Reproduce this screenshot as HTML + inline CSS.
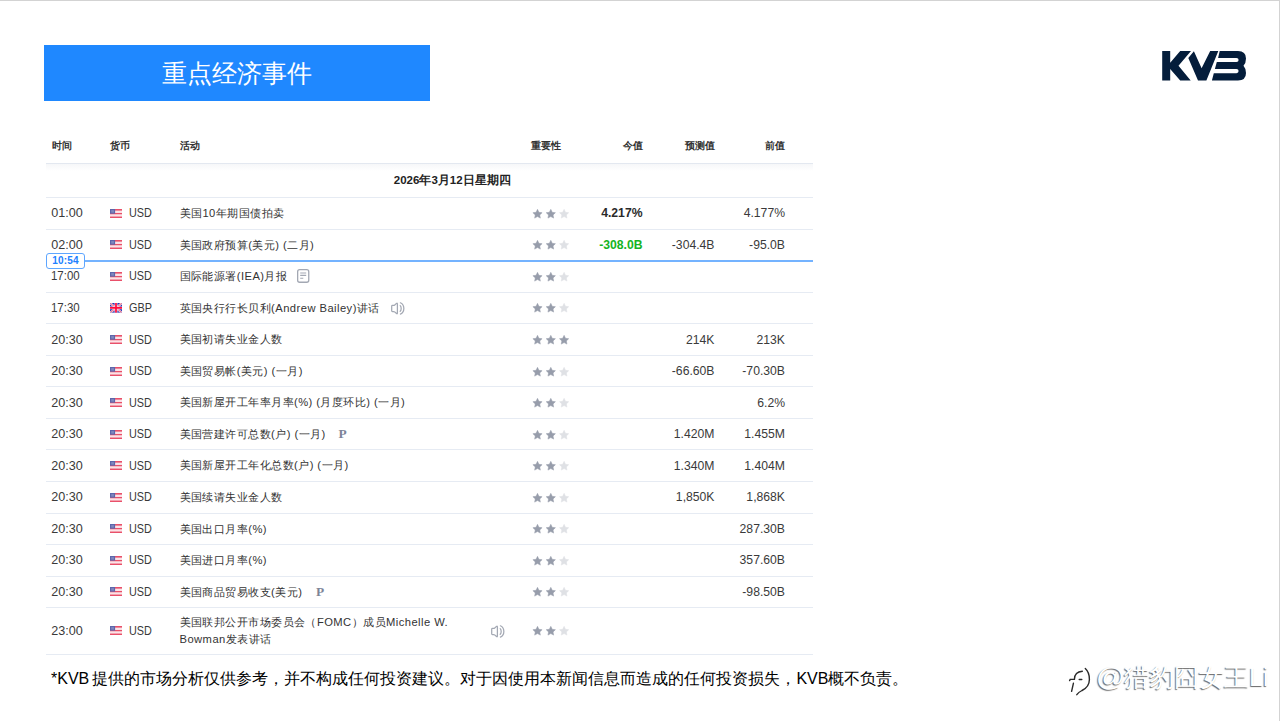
<!DOCTYPE html>
<html><head><meta charset="utf-8">
<style>
*{margin:0;padding:0;box-sizing:border-box}
html,body{width:1280px;height:721px;overflow:hidden;background:#fff}
body{position:relative;font-family:"Liberation Sans",sans-serif;color:#333}
.bt{position:absolute;left:0;top:0;width:1280px;height:1px;background:#d3d3d3}
.br{position:absolute;right:0;top:0;width:1px;height:721px;background:#d3d3d3}
.title{position:absolute;left:44px;top:45px;width:386px;height:56px;background:#1f88ff;color:#fff;font-size:25px;font-weight:300;text-align:center;line-height:56px}
.logo{position:absolute;left:0;top:0;width:1280px;height:100px}
.tbl{position:absolute;left:46px;top:130px;width:767px}
.hd{position:absolute;top:0;height:33.9px;width:767px;border-bottom:1px solid #e3e8f0}
.hd span{position:absolute;top:9px;font-size:10.2px;font-weight:bold;color:#333;line-height:14px;white-space:nowrap}
.shadow{position:absolute;left:0;top:33.9px;width:767px;height:7px;background:linear-gradient(#f6f7f9,#fff)}
.date{position:absolute;top:43.3px;left:347.8px;font-size:11.5px;font-weight:bold;color:#222;line-height:14px;white-space:nowrap}
.row{position:absolute;left:0;width:767px;border-top:1px solid #e6ebf3}
.row .t{position:absolute;left:5.3px;font-size:12.6px;color:#3a3a3a}
.row .f{position:absolute;left:64px;width:12px;height:9px}
.row .c{position:absolute;left:82.6px;font-size:12.6px;color:#3a3a3a;transform:scaleX(0.86);transform-origin:0 50%}
.row .a{position:absolute;left:133.5px;font-size:11.2px;letter-spacing:0.45px;color:#333;font-weight:500;white-space:nowrap}
.row .s{position:absolute;left:486px;width:40px;height:10px}
.row .v1,.row .v2,.row .v3{position:absolute;text-align:right;font-size:12.2px;color:#3a3a3a;white-space:nowrap}
.row .t,.row .c,.row .a,.row .v1,.row .v2,.row .v3,.row .pp{top:0;bottom:0;display:flex;align-items:center}
.row .v1,.row .v2,.row .v3{justify-content:flex-end}
.row .f,.row .s{top:50%;margin-top:-4.5px}
.row .ic{position:absolute}
.row .pp{position:absolute;font-family:"Liberation Serif",serif;font-size:13.4px;color:#7d8498;font-weight:bold;padding-top:0.6px}
.row .a{line-height:16.4px}
.row .v1{right:170.5px;font-weight:bold;color:#2a2a2a}
.row .v2{right:98.5px}
.row .v3{right:28px}
.green{color:#14b423!important}
.disc{position:absolute;left:51px;top:667.5px;font-size:16px;word-spacing:-1.3px;font-weight:500;color:#000;white-space:nowrap;line-height:22px}
.wm{position:absolute;left:1096px;top:662px;font-size:25px;color:#fff;white-space:nowrap;text-shadow:-0.8px 1px 1px rgba(0,0,0,.6);font-weight:300;line-height:30px}
.now{position:absolute;left:0;top:130px;width:767px;height:1.6px;background:#74b3ff}
.badge{position:absolute;left:0;top:122.7px;width:39px;height:16.2px;border:1.6px solid #5ea6ff;border-radius:3px;background:#fff;color:#2080ff;font-size:10px;font-weight:bold;text-align:center;line-height:13px;letter-spacing:0.2px}
</style></head><body>
<div class="bt"></div><div class="br"></div>
<div class="title">重点经济事件</div>
<svg class="logo" viewBox="0 0 1280 100">
<g fill="#041d3b">
<path d="M1162.2 51H1170.2V62.7L1180.2 51H1191L1178.5 65.7L1190.7 80.4H1180.2L1170.2 69V80.4H1162.2Z"/>
<path d="M1188.3 57.9L1193.9 51.3L1201.6 68.2L1210.2 51H1218.3L1206.4 80.4H1198Z"/>
<path d="M1219.7 51H1238Q1246 51 1246 58.5Q1246 63 1243.5 65.7Q1246 68.5 1246 73Q1246 80.4 1238 80.4H1211.9L1213.8 73.2H1236.5Q1238.6 73.2 1238.6 71.1Q1238.6 69 1236.5 69H1214.9L1216.8 62.1H1236.5Q1238.6 62.1 1238.6 60Q1238.6 57.9 1236.5 57.9H1218.1Z"/>
</g>
</svg>
<div class="tbl">
 <div class="hd"><span style="left:5.5px">时间</span><span style="left:64px">货币</span><span style="left:133.5px">活动</span><span style="left:485px">重要性</span><span style="right:170px">今值</span><span style="right:98.5px">预测值</span><span style="right:28px">前值</span></div>
 <div class="shadow"></div>
 <div class="date">2026年3月12日星期四</div>
 <div class="row" style="top:67.10px;height:31.54px"><span class="t">01:00</span><svg class="f" viewBox="0 0 12 9"><rect width="12" height="9" fill="#fff"/><rect y="0" width="12" height="1.8" fill="#e9506a"/><rect y="3.75" width="12" height="1.8" fill="#e9506a"/><rect y="7.3" width="12" height="1.7" fill="#e9506a"/><rect y="1.8" width="12" height="1.95" fill="#fbe3e7"/><rect y="5.55" width="12" height="1.75" fill="#fbe3e7"/><rect width="5.1" height="4.7" fill="#5e66aa"/><rect x="1.2" y="1.1" width="2.7" height="2.5" fill="#8088bf"/></svg><span class="c">USD</span><span class="a">美国10年期国债拍卖</span><svg class="s" viewBox="0 0 40 10" overflow="visible"><path transform="translate(0.00,0)" d="M5.50 0.35L6.90 3.28L10.11 3.70L7.76 5.93L8.35 9.12L5.50 7.58L2.65 9.12L3.24 5.93L0.89 3.70L4.10 3.28Z" fill="#979dab" stroke="#979dab" stroke-width="0.5" stroke-linejoin="round"/><path transform="translate(13.30,0)" d="M5.50 0.35L6.90 3.28L10.11 3.70L7.76 5.93L8.35 9.12L5.50 7.58L2.65 9.12L3.24 5.93L0.89 3.70L4.10 3.28Z" fill="#979dab" stroke="#979dab" stroke-width="0.5" stroke-linejoin="round"/><path transform="translate(26.60,0)" d="M5.50 0.35L6.90 3.28L10.11 3.70L7.76 5.93L8.35 9.12L5.50 7.58L2.65 9.12L3.24 5.93L0.89 3.70L4.10 3.28Z" fill="#dfe1e5" stroke="#dfe1e5" stroke-width="0.5" stroke-linejoin="round"/></svg><span class="v1 ">4.217%</span><span class="v3">4.177%</span></div>
<div class="row" style="top:98.64px;height:31.54px"><span class="t">02:00</span><svg class="f" viewBox="0 0 12 9"><rect width="12" height="9" fill="#fff"/><rect y="0" width="12" height="1.8" fill="#e9506a"/><rect y="3.75" width="12" height="1.8" fill="#e9506a"/><rect y="7.3" width="12" height="1.7" fill="#e9506a"/><rect y="1.8" width="12" height="1.95" fill="#fbe3e7"/><rect y="5.55" width="12" height="1.75" fill="#fbe3e7"/><rect width="5.1" height="4.7" fill="#5e66aa"/><rect x="1.2" y="1.1" width="2.7" height="2.5" fill="#8088bf"/></svg><span class="c">USD</span><span class="a">美国政府预算(美元) (二月)</span><svg class="s" viewBox="0 0 40 10" overflow="visible"><path transform="translate(0.00,0)" d="M5.50 0.35L6.90 3.28L10.11 3.70L7.76 5.93L8.35 9.12L5.50 7.58L2.65 9.12L3.24 5.93L0.89 3.70L4.10 3.28Z" fill="#979dab" stroke="#979dab" stroke-width="0.5" stroke-linejoin="round"/><path transform="translate(13.30,0)" d="M5.50 0.35L6.90 3.28L10.11 3.70L7.76 5.93L8.35 9.12L5.50 7.58L2.65 9.12L3.24 5.93L0.89 3.70L4.10 3.28Z" fill="#979dab" stroke="#979dab" stroke-width="0.5" stroke-linejoin="round"/><path transform="translate(26.60,0)" d="M5.50 0.35L6.90 3.28L10.11 3.70L7.76 5.93L8.35 9.12L5.50 7.58L2.65 9.12L3.24 5.93L0.89 3.70L4.10 3.28Z" fill="#dfe1e5" stroke="#dfe1e5" stroke-width="0.5" stroke-linejoin="round"/></svg><span class="v1 green">-308.0B</span><span class="v2">-304.4B</span><span class="v3">-95.0B</span></div>
<div class="row" style="top:130.18px;height:31.54px"><span class="t" style="transform:scaleX(0.91);transform-origin:0 50%">17:00</span><svg class="f" viewBox="0 0 12 9"><rect width="12" height="9" fill="#fff"/><rect y="0" width="12" height="1.8" fill="#e9506a"/><rect y="3.75" width="12" height="1.8" fill="#e9506a"/><rect y="7.3" width="12" height="1.7" fill="#e9506a"/><rect y="1.8" width="12" height="1.95" fill="#fbe3e7"/><rect y="5.55" width="12" height="1.75" fill="#fbe3e7"/><rect width="5.1" height="4.7" fill="#5e66aa"/><rect x="1.2" y="1.1" width="2.7" height="2.5" fill="#8088bf"/></svg><span class="c">USD</span><span class="a">国际能源署(IEA)月报</span><svg class="ic" style="left:250.9px;top:7.9px" width="13" height="14" viewBox="0 0 13 14"><rect x="0.65" y="0.65" width="11.1" height="12.6" rx="2" fill="none" stroke="#a3a8b3" stroke-width="1.3"/><path d="M3.2 4H9.2M3.2 6.4H9.2M3.2 9.2H6.3" stroke="#a3a8b3" stroke-width="1.1"/></svg><svg class="s" viewBox="0 0 40 10" overflow="visible"><path transform="translate(0.00,0)" d="M5.50 0.35L6.90 3.28L10.11 3.70L7.76 5.93L8.35 9.12L5.50 7.58L2.65 9.12L3.24 5.93L0.89 3.70L4.10 3.28Z" fill="#979dab" stroke="#979dab" stroke-width="0.5" stroke-linejoin="round"/><path transform="translate(13.30,0)" d="M5.50 0.35L6.90 3.28L10.11 3.70L7.76 5.93L8.35 9.12L5.50 7.58L2.65 9.12L3.24 5.93L0.89 3.70L4.10 3.28Z" fill="#979dab" stroke="#979dab" stroke-width="0.5" stroke-linejoin="round"/><path transform="translate(26.60,0)" d="M5.50 0.35L6.90 3.28L10.11 3.70L7.76 5.93L8.35 9.12L5.50 7.58L2.65 9.12L3.24 5.93L0.89 3.70L4.10 3.28Z" fill="#dfe1e5" stroke="#dfe1e5" stroke-width="0.5" stroke-linejoin="round"/></svg></div>
<div class="row" style="top:161.72px;height:31.54px"><span class="t" style="transform:scaleX(0.91);transform-origin:0 50%">17:30</span><svg class="f" style="height:9.8px;margin-top:-4.9px" viewBox="0 0 12 9.8"><defs><clipPath id="gbc"><rect width="12" height="9.8" rx="1.2"/></clipPath></defs><g clip-path="url(#gbc)"><rect width="12" height="9.8" fill="#2233b5"/><path d="M0 0L12 9.8M12 0L0 9.8" stroke="#f4d0da" stroke-width="2.2"/><path d="M0 0L12 9.8M12 0L0 9.8" stroke="#f0506e" stroke-width="0.8"/><path d="M6 0V9.8M0 4.9H12" stroke="#fbe0e6" stroke-width="2.9"/><path d="M6 0V9.8M0 4.9H12" stroke="#ff0a3c" stroke-width="1.75"/></g></svg><span class="c">GBP</span><span class="a">英国央行行长贝利(Andrew Bailey)讲话</span><svg class="ic" style="left:345.1px;top:9.6px" width="15" height="13" viewBox="0 0 15 13"><path d="M0.7 4.2Q0.7 3.4 1.5 3.4H2.6Q3.2 3.4 3.7 3L5.5 1.4Q6.4 0.7 6.4 1.9V11Q6.4 12.2 5.5 11.5L3.7 9.9Q3.2 9.5 2.6 9.5H1.5Q0.7 9.5 0.7 8.7Z" fill="none" stroke="#a3a8b3" stroke-width="1.25" stroke-linejoin="round"/><path d="M9.2 3.6C10.5 4.8 10.5 8.1 9.2 9.3M9.4 0.8C14 3 14 9.9 9.4 12.1" fill="none" stroke="#a3a8b3" stroke-width="1.25" stroke-linecap="round"/></svg><svg class="s" viewBox="0 0 40 10" overflow="visible"><path transform="translate(0.00,0)" d="M5.50 0.35L6.90 3.28L10.11 3.70L7.76 5.93L8.35 9.12L5.50 7.58L2.65 9.12L3.24 5.93L0.89 3.70L4.10 3.28Z" fill="#979dab" stroke="#979dab" stroke-width="0.5" stroke-linejoin="round"/><path transform="translate(13.30,0)" d="M5.50 0.35L6.90 3.28L10.11 3.70L7.76 5.93L8.35 9.12L5.50 7.58L2.65 9.12L3.24 5.93L0.89 3.70L4.10 3.28Z" fill="#979dab" stroke="#979dab" stroke-width="0.5" stroke-linejoin="round"/><path transform="translate(26.60,0)" d="M5.50 0.35L6.90 3.28L10.11 3.70L7.76 5.93L8.35 9.12L5.50 7.58L2.65 9.12L3.24 5.93L0.89 3.70L4.10 3.28Z" fill="#dfe1e5" stroke="#dfe1e5" stroke-width="0.5" stroke-linejoin="round"/></svg></div>
<div class="row" style="top:193.26px;height:31.54px"><span class="t">20:30</span><svg class="f" viewBox="0 0 12 9"><rect width="12" height="9" fill="#fff"/><rect y="0" width="12" height="1.8" fill="#e9506a"/><rect y="3.75" width="12" height="1.8" fill="#e9506a"/><rect y="7.3" width="12" height="1.7" fill="#e9506a"/><rect y="1.8" width="12" height="1.95" fill="#fbe3e7"/><rect y="5.55" width="12" height="1.75" fill="#fbe3e7"/><rect width="5.1" height="4.7" fill="#5e66aa"/><rect x="1.2" y="1.1" width="2.7" height="2.5" fill="#8088bf"/></svg><span class="c">USD</span><span class="a">美国初请失业金人数</span><svg class="s" viewBox="0 0 40 10" overflow="visible"><path transform="translate(0.00,0)" d="M5.50 0.35L6.90 3.28L10.11 3.70L7.76 5.93L8.35 9.12L5.50 7.58L2.65 9.12L3.24 5.93L0.89 3.70L4.10 3.28Z" fill="#979dab" stroke="#979dab" stroke-width="0.5" stroke-linejoin="round"/><path transform="translate(13.30,0)" d="M5.50 0.35L6.90 3.28L10.11 3.70L7.76 5.93L8.35 9.12L5.50 7.58L2.65 9.12L3.24 5.93L0.89 3.70L4.10 3.28Z" fill="#979dab" stroke="#979dab" stroke-width="0.5" stroke-linejoin="round"/><path transform="translate(26.60,0)" d="M5.50 0.35L6.90 3.28L10.11 3.70L7.76 5.93L8.35 9.12L5.50 7.58L2.65 9.12L3.24 5.93L0.89 3.70L4.10 3.28Z" fill="#979dab" stroke="#979dab" stroke-width="0.5" stroke-linejoin="round"/></svg><span class="v2">214K</span><span class="v3">213K</span></div>
<div class="row" style="top:224.80px;height:31.54px"><span class="t">20:30</span><svg class="f" viewBox="0 0 12 9"><rect width="12" height="9" fill="#fff"/><rect y="0" width="12" height="1.8" fill="#e9506a"/><rect y="3.75" width="12" height="1.8" fill="#e9506a"/><rect y="7.3" width="12" height="1.7" fill="#e9506a"/><rect y="1.8" width="12" height="1.95" fill="#fbe3e7"/><rect y="5.55" width="12" height="1.75" fill="#fbe3e7"/><rect width="5.1" height="4.7" fill="#5e66aa"/><rect x="1.2" y="1.1" width="2.7" height="2.5" fill="#8088bf"/></svg><span class="c">USD</span><span class="a">美国贸易帐(美元) (一月)</span><svg class="s" viewBox="0 0 40 10" overflow="visible"><path transform="translate(0.00,0)" d="M5.50 0.35L6.90 3.28L10.11 3.70L7.76 5.93L8.35 9.12L5.50 7.58L2.65 9.12L3.24 5.93L0.89 3.70L4.10 3.28Z" fill="#979dab" stroke="#979dab" stroke-width="0.5" stroke-linejoin="round"/><path transform="translate(13.30,0)" d="M5.50 0.35L6.90 3.28L10.11 3.70L7.76 5.93L8.35 9.12L5.50 7.58L2.65 9.12L3.24 5.93L0.89 3.70L4.10 3.28Z" fill="#979dab" stroke="#979dab" stroke-width="0.5" stroke-linejoin="round"/><path transform="translate(26.60,0)" d="M5.50 0.35L6.90 3.28L10.11 3.70L7.76 5.93L8.35 9.12L5.50 7.58L2.65 9.12L3.24 5.93L0.89 3.70L4.10 3.28Z" fill="#dfe1e5" stroke="#dfe1e5" stroke-width="0.5" stroke-linejoin="round"/></svg><span class="v2">-66.60B</span><span class="v3">-70.30B</span></div>
<div class="row" style="top:256.34px;height:31.54px"><span class="t">20:30</span><svg class="f" viewBox="0 0 12 9"><rect width="12" height="9" fill="#fff"/><rect y="0" width="12" height="1.8" fill="#e9506a"/><rect y="3.75" width="12" height="1.8" fill="#e9506a"/><rect y="7.3" width="12" height="1.7" fill="#e9506a"/><rect y="1.8" width="12" height="1.95" fill="#fbe3e7"/><rect y="5.55" width="12" height="1.75" fill="#fbe3e7"/><rect width="5.1" height="4.7" fill="#5e66aa"/><rect x="1.2" y="1.1" width="2.7" height="2.5" fill="#8088bf"/></svg><span class="c">USD</span><span class="a">美国新屋开工年率月率(%) (月度环比) (一月)</span><svg class="s" viewBox="0 0 40 10" overflow="visible"><path transform="translate(0.00,0)" d="M5.50 0.35L6.90 3.28L10.11 3.70L7.76 5.93L8.35 9.12L5.50 7.58L2.65 9.12L3.24 5.93L0.89 3.70L4.10 3.28Z" fill="#979dab" stroke="#979dab" stroke-width="0.5" stroke-linejoin="round"/><path transform="translate(13.30,0)" d="M5.50 0.35L6.90 3.28L10.11 3.70L7.76 5.93L8.35 9.12L5.50 7.58L2.65 9.12L3.24 5.93L0.89 3.70L4.10 3.28Z" fill="#979dab" stroke="#979dab" stroke-width="0.5" stroke-linejoin="round"/><path transform="translate(26.60,0)" d="M5.50 0.35L6.90 3.28L10.11 3.70L7.76 5.93L8.35 9.12L5.50 7.58L2.65 9.12L3.24 5.93L0.89 3.70L4.10 3.28Z" fill="#dfe1e5" stroke="#dfe1e5" stroke-width="0.5" stroke-linejoin="round"/></svg><span class="v3">6.2%</span></div>
<div class="row" style="top:287.88px;height:31.54px"><span class="t">20:30</span><svg class="f" viewBox="0 0 12 9"><rect width="12" height="9" fill="#fff"/><rect y="0" width="12" height="1.8" fill="#e9506a"/><rect y="3.75" width="12" height="1.8" fill="#e9506a"/><rect y="7.3" width="12" height="1.7" fill="#e9506a"/><rect y="1.8" width="12" height="1.95" fill="#fbe3e7"/><rect y="5.55" width="12" height="1.75" fill="#fbe3e7"/><rect width="5.1" height="4.7" fill="#5e66aa"/><rect x="1.2" y="1.1" width="2.7" height="2.5" fill="#8088bf"/></svg><span class="c">USD</span><span class="a">美国营建许可总数(户) (一月)</span><span class="pp" style="left:292.5px">P</span><svg class="s" viewBox="0 0 40 10" overflow="visible"><path transform="translate(0.00,0)" d="M5.50 0.35L6.90 3.28L10.11 3.70L7.76 5.93L8.35 9.12L5.50 7.58L2.65 9.12L3.24 5.93L0.89 3.70L4.10 3.28Z" fill="#979dab" stroke="#979dab" stroke-width="0.5" stroke-linejoin="round"/><path transform="translate(13.30,0)" d="M5.50 0.35L6.90 3.28L10.11 3.70L7.76 5.93L8.35 9.12L5.50 7.58L2.65 9.12L3.24 5.93L0.89 3.70L4.10 3.28Z" fill="#979dab" stroke="#979dab" stroke-width="0.5" stroke-linejoin="round"/><path transform="translate(26.60,0)" d="M5.50 0.35L6.90 3.28L10.11 3.70L7.76 5.93L8.35 9.12L5.50 7.58L2.65 9.12L3.24 5.93L0.89 3.70L4.10 3.28Z" fill="#dfe1e5" stroke="#dfe1e5" stroke-width="0.5" stroke-linejoin="round"/></svg><span class="v2">1.420M</span><span class="v3">1.455M</span></div>
<div class="row" style="top:319.42px;height:31.54px"><span class="t">20:30</span><svg class="f" viewBox="0 0 12 9"><rect width="12" height="9" fill="#fff"/><rect y="0" width="12" height="1.8" fill="#e9506a"/><rect y="3.75" width="12" height="1.8" fill="#e9506a"/><rect y="7.3" width="12" height="1.7" fill="#e9506a"/><rect y="1.8" width="12" height="1.95" fill="#fbe3e7"/><rect y="5.55" width="12" height="1.75" fill="#fbe3e7"/><rect width="5.1" height="4.7" fill="#5e66aa"/><rect x="1.2" y="1.1" width="2.7" height="2.5" fill="#8088bf"/></svg><span class="c">USD</span><span class="a">美国新屋开工年化总数(户) (一月)</span><svg class="s" viewBox="0 0 40 10" overflow="visible"><path transform="translate(0.00,0)" d="M5.50 0.35L6.90 3.28L10.11 3.70L7.76 5.93L8.35 9.12L5.50 7.58L2.65 9.12L3.24 5.93L0.89 3.70L4.10 3.28Z" fill="#979dab" stroke="#979dab" stroke-width="0.5" stroke-linejoin="round"/><path transform="translate(13.30,0)" d="M5.50 0.35L6.90 3.28L10.11 3.70L7.76 5.93L8.35 9.12L5.50 7.58L2.65 9.12L3.24 5.93L0.89 3.70L4.10 3.28Z" fill="#979dab" stroke="#979dab" stroke-width="0.5" stroke-linejoin="round"/><path transform="translate(26.60,0)" d="M5.50 0.35L6.90 3.28L10.11 3.70L7.76 5.93L8.35 9.12L5.50 7.58L2.65 9.12L3.24 5.93L0.89 3.70L4.10 3.28Z" fill="#dfe1e5" stroke="#dfe1e5" stroke-width="0.5" stroke-linejoin="round"/></svg><span class="v2">1.340M</span><span class="v3">1.404M</span></div>
<div class="row" style="top:350.96px;height:31.54px"><span class="t">20:30</span><svg class="f" viewBox="0 0 12 9"><rect width="12" height="9" fill="#fff"/><rect y="0" width="12" height="1.8" fill="#e9506a"/><rect y="3.75" width="12" height="1.8" fill="#e9506a"/><rect y="7.3" width="12" height="1.7" fill="#e9506a"/><rect y="1.8" width="12" height="1.95" fill="#fbe3e7"/><rect y="5.55" width="12" height="1.75" fill="#fbe3e7"/><rect width="5.1" height="4.7" fill="#5e66aa"/><rect x="1.2" y="1.1" width="2.7" height="2.5" fill="#8088bf"/></svg><span class="c">USD</span><span class="a">美国续请失业金人数</span><svg class="s" viewBox="0 0 40 10" overflow="visible"><path transform="translate(0.00,0)" d="M5.50 0.35L6.90 3.28L10.11 3.70L7.76 5.93L8.35 9.12L5.50 7.58L2.65 9.12L3.24 5.93L0.89 3.70L4.10 3.28Z" fill="#979dab" stroke="#979dab" stroke-width="0.5" stroke-linejoin="round"/><path transform="translate(13.30,0)" d="M5.50 0.35L6.90 3.28L10.11 3.70L7.76 5.93L8.35 9.12L5.50 7.58L2.65 9.12L3.24 5.93L0.89 3.70L4.10 3.28Z" fill="#979dab" stroke="#979dab" stroke-width="0.5" stroke-linejoin="round"/><path transform="translate(26.60,0)" d="M5.50 0.35L6.90 3.28L10.11 3.70L7.76 5.93L8.35 9.12L5.50 7.58L2.65 9.12L3.24 5.93L0.89 3.70L4.10 3.28Z" fill="#dfe1e5" stroke="#dfe1e5" stroke-width="0.5" stroke-linejoin="round"/></svg><span class="v2">1,850K</span><span class="v3">1,868K</span></div>
<div class="row" style="top:382.50px;height:31.54px"><span class="t">20:30</span><svg class="f" viewBox="0 0 12 9"><rect width="12" height="9" fill="#fff"/><rect y="0" width="12" height="1.8" fill="#e9506a"/><rect y="3.75" width="12" height="1.8" fill="#e9506a"/><rect y="7.3" width="12" height="1.7" fill="#e9506a"/><rect y="1.8" width="12" height="1.95" fill="#fbe3e7"/><rect y="5.55" width="12" height="1.75" fill="#fbe3e7"/><rect width="5.1" height="4.7" fill="#5e66aa"/><rect x="1.2" y="1.1" width="2.7" height="2.5" fill="#8088bf"/></svg><span class="c">USD</span><span class="a">美国出口月率(%)</span><svg class="s" viewBox="0 0 40 10" overflow="visible"><path transform="translate(0.00,0)" d="M5.50 0.35L6.90 3.28L10.11 3.70L7.76 5.93L8.35 9.12L5.50 7.58L2.65 9.12L3.24 5.93L0.89 3.70L4.10 3.28Z" fill="#979dab" stroke="#979dab" stroke-width="0.5" stroke-linejoin="round"/><path transform="translate(13.30,0)" d="M5.50 0.35L6.90 3.28L10.11 3.70L7.76 5.93L8.35 9.12L5.50 7.58L2.65 9.12L3.24 5.93L0.89 3.70L4.10 3.28Z" fill="#979dab" stroke="#979dab" stroke-width="0.5" stroke-linejoin="round"/><path transform="translate(26.60,0)" d="M5.50 0.35L6.90 3.28L10.11 3.70L7.76 5.93L8.35 9.12L5.50 7.58L2.65 9.12L3.24 5.93L0.89 3.70L4.10 3.28Z" fill="#dfe1e5" stroke="#dfe1e5" stroke-width="0.5" stroke-linejoin="round"/></svg><span class="v3">287.30B</span></div>
<div class="row" style="top:414.04px;height:31.54px"><span class="t">20:30</span><svg class="f" viewBox="0 0 12 9"><rect width="12" height="9" fill="#fff"/><rect y="0" width="12" height="1.8" fill="#e9506a"/><rect y="3.75" width="12" height="1.8" fill="#e9506a"/><rect y="7.3" width="12" height="1.7" fill="#e9506a"/><rect y="1.8" width="12" height="1.95" fill="#fbe3e7"/><rect y="5.55" width="12" height="1.75" fill="#fbe3e7"/><rect width="5.1" height="4.7" fill="#5e66aa"/><rect x="1.2" y="1.1" width="2.7" height="2.5" fill="#8088bf"/></svg><span class="c">USD</span><span class="a">美国进口月率(%)</span><svg class="s" viewBox="0 0 40 10" overflow="visible"><path transform="translate(0.00,0)" d="M5.50 0.35L6.90 3.28L10.11 3.70L7.76 5.93L8.35 9.12L5.50 7.58L2.65 9.12L3.24 5.93L0.89 3.70L4.10 3.28Z" fill="#979dab" stroke="#979dab" stroke-width="0.5" stroke-linejoin="round"/><path transform="translate(13.30,0)" d="M5.50 0.35L6.90 3.28L10.11 3.70L7.76 5.93L8.35 9.12L5.50 7.58L2.65 9.12L3.24 5.93L0.89 3.70L4.10 3.28Z" fill="#979dab" stroke="#979dab" stroke-width="0.5" stroke-linejoin="round"/><path transform="translate(26.60,0)" d="M5.50 0.35L6.90 3.28L10.11 3.70L7.76 5.93L8.35 9.12L5.50 7.58L2.65 9.12L3.24 5.93L0.89 3.70L4.10 3.28Z" fill="#dfe1e5" stroke="#dfe1e5" stroke-width="0.5" stroke-linejoin="round"/></svg><span class="v3">357.60B</span></div>
<div class="row" style="top:445.58px;height:31.54px"><span class="t">20:30</span><svg class="f" viewBox="0 0 12 9"><rect width="12" height="9" fill="#fff"/><rect y="0" width="12" height="1.8" fill="#e9506a"/><rect y="3.75" width="12" height="1.8" fill="#e9506a"/><rect y="7.3" width="12" height="1.7" fill="#e9506a"/><rect y="1.8" width="12" height="1.95" fill="#fbe3e7"/><rect y="5.55" width="12" height="1.75" fill="#fbe3e7"/><rect width="5.1" height="4.7" fill="#5e66aa"/><rect x="1.2" y="1.1" width="2.7" height="2.5" fill="#8088bf"/></svg><span class="c">USD</span><span class="a">美国商品贸易收支(美元)</span><span class="pp" style="left:270px">P</span><svg class="s" viewBox="0 0 40 10" overflow="visible"><path transform="translate(0.00,0)" d="M5.50 0.35L6.90 3.28L10.11 3.70L7.76 5.93L8.35 9.12L5.50 7.58L2.65 9.12L3.24 5.93L0.89 3.70L4.10 3.28Z" fill="#979dab" stroke="#979dab" stroke-width="0.5" stroke-linejoin="round"/><path transform="translate(13.30,0)" d="M5.50 0.35L6.90 3.28L10.11 3.70L7.76 5.93L8.35 9.12L5.50 7.58L2.65 9.12L3.24 5.93L0.89 3.70L4.10 3.28Z" fill="#979dab" stroke="#979dab" stroke-width="0.5" stroke-linejoin="round"/><path transform="translate(26.60,0)" d="M5.50 0.35L6.90 3.28L10.11 3.70L7.76 5.93L8.35 9.12L5.50 7.58L2.65 9.12L3.24 5.93L0.89 3.70L4.10 3.28Z" fill="#dfe1e5" stroke="#dfe1e5" stroke-width="0.5" stroke-linejoin="round"/></svg><span class="v3">-98.50B</span></div>
<div class="row last" style="top:477.12px;height:46.50px"><span class="t">23:00</span><svg class="f" viewBox="0 0 12 9"><rect width="12" height="9" fill="#fff"/><rect y="0" width="12" height="1.8" fill="#e9506a"/><rect y="3.75" width="12" height="1.8" fill="#e9506a"/><rect y="7.3" width="12" height="1.7" fill="#e9506a"/><rect y="1.8" width="12" height="1.95" fill="#fbe3e7"/><rect y="5.55" width="12" height="1.75" fill="#fbe3e7"/><rect width="5.1" height="4.7" fill="#5e66aa"/><rect x="1.2" y="1.1" width="2.7" height="2.5" fill="#8088bf"/></svg><span class="c">USD</span><span class="a">美国联邦公开市场委员会（FOMC）成员Michelle W.<br>Bowman发表讲话</span><svg class="ic" style="left:444.7px;top:16.7px" width="15" height="13" viewBox="0 0 15 13"><path d="M0.7 4.2Q0.7 3.4 1.5 3.4H2.6Q3.2 3.4 3.7 3L5.5 1.4Q6.4 0.7 6.4 1.9V11Q6.4 12.2 5.5 11.5L3.7 9.9Q3.2 9.5 2.6 9.5H1.5Q0.7 9.5 0.7 8.7Z" fill="none" stroke="#a3a8b3" stroke-width="1.25" stroke-linejoin="round"/><path d="M9.2 3.6C10.5 4.8 10.5 8.1 9.2 9.3M9.4 0.8C14 3 14 9.9 9.4 12.1" fill="none" stroke="#a3a8b3" stroke-width="1.25" stroke-linecap="round"/></svg><svg class="s" viewBox="0 0 40 10" overflow="visible"><path transform="translate(0.00,0)" d="M5.50 0.35L6.90 3.28L10.11 3.70L7.76 5.93L8.35 9.12L5.50 7.58L2.65 9.12L3.24 5.93L0.89 3.70L4.10 3.28Z" fill="#979dab" stroke="#979dab" stroke-width="0.5" stroke-linejoin="round"/><path transform="translate(13.30,0)" d="M5.50 0.35L6.90 3.28L10.11 3.70L7.76 5.93L8.35 9.12L5.50 7.58L2.65 9.12L3.24 5.93L0.89 3.70L4.10 3.28Z" fill="#979dab" stroke="#979dab" stroke-width="0.5" stroke-linejoin="round"/><path transform="translate(26.60,0)" d="M5.50 0.35L6.90 3.28L10.11 3.70L7.76 5.93L8.35 9.12L5.50 7.58L2.65 9.12L3.24 5.93L0.89 3.70L4.10 3.28Z" fill="#dfe1e5" stroke="#dfe1e5" stroke-width="0.5" stroke-linejoin="round"/></svg></div>
<div class="row" style="top:523.62px;height:1px"></div>
<div class="now"></div><div class="badge">10:54</div>
</div>
<div class="disc">*KVB 提供的市场分析仅供参考，并不构成任何投资建议。对于因使用本新闻信息而造成的任何投资损失，KVB概不负责。</div>
<svg style="position:absolute;left:1065px;top:662px" width="30" height="35" viewBox="0 0 30 35"><g fill="none" stroke="#2a2a2a" stroke-width="1.4" stroke-linecap="round"><path d="M4.6 18.6L5.2 17.4H9.4Q9.2 14 11.5 11.6Q13.5 9.5 17.3 9.2"/><path d="M8.4 21.3L6.6 29.3"/><path d="M14.2 17.5H16.8"/><path d="M20.3 6.6Q24.5 10.5 24.4 17.5Q24.3 25 17 28.5Q13.5 30.3 11.8 32.7"/></g></svg>
<div class="wm"><span style="display:inline-block;transform:scaleX(1.14);transform-origin:0 50%;margin-right:2.6px">@</span><span>猎豹囧女王Li</span></div>
</body></html>
